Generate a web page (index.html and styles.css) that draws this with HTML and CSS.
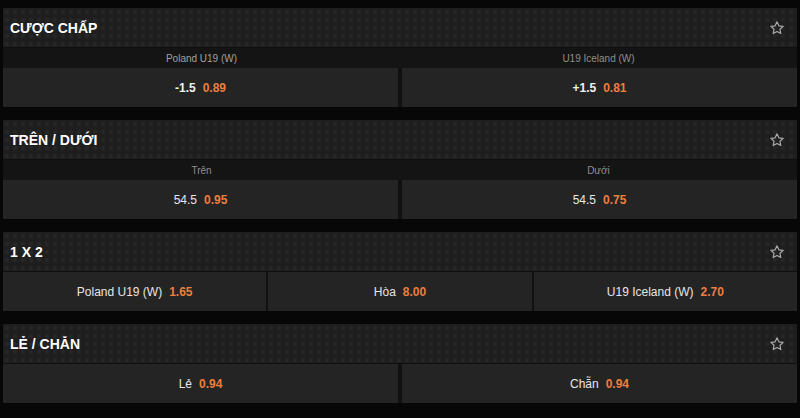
FILE: index.html
```html
<!DOCTYPE html>
<html lang="vi">
<head>
    <meta charset="UTF-8">
    <meta name="viewport" content="width=device-width, initial-scale=1.0">
    <title>Kèo cược</title>
    <link rel="stylesheet" href="styles.css">
</head>
<body>
    <div class="markets">

        <!-- Cược chấp -->
        <div class="market">
            <div class="market-head">
                <h2>CƯỢC CHẤP</h2>
                <svg class="star" viewBox="0 0 24 24"><path d="M12 2.8l2.8 5.9 6.4.8-4.7 4.4 1.2 6.4L12 17.2l-5.7 3.1 1.2-6.4-4.7-4.4 6.4-.8z"/></svg>
            </div>
            <div class="labels cols-2">
                <span class="strong">Poland U19 (W)</span>
                <span>U19 Iceland (W)</span>
            </div>
            <div class="odds cols-2">
                <button><b>-1.5</b><em>0.89</em></button>
                <button><b>+1.5</b><em>0.81</em></button>
            </div>
        </div>

        <!-- Trên / Dưới -->
        <div class="market">
            <div class="market-head">
                <h2>TRÊN / DƯỚI</h2>
                <svg class="star" viewBox="0 0 24 24"><path d="M12 2.8l2.8 5.9 6.4.8-4.7 4.4 1.2 6.4L12 17.2l-5.7 3.1 1.2-6.4-4.7-4.4 6.4-.8z"/></svg>
            </div>
            <div class="labels cols-2">
                <span>Trên</span>
                <span>Dưới</span>
            </div>
            <div class="odds cols-2">
                <button><span>54.5</span><em>0.95</em></button>
                <button><span>54.5</span><em>0.75</em></button>
            </div>
        </div>

        <!-- 1 X 2 -->
        <div class="market">
            <div class="market-head">
                <h2>1 X 2</h2>
                <svg class="star" viewBox="0 0 24 24"><path d="M12 2.8l2.8 5.9 6.4.8-4.7 4.4 1.2 6.4L12 17.2l-5.7 3.1 1.2-6.4-4.7-4.4 6.4-.8z"/></svg>
            </div>
            <div class="odds cols-3">
                <button><span>Poland U19 (W)</span><em>1.65</em></button>
                <button><span>Hòa</span><em>8.00</em></button>
                <button><span>U19 Iceland (W)</span><em>2.70</em></button>
            </div>
        </div>

        <!-- Lẻ / Chẵn -->
        <div class="market">
            <div class="market-head">
                <h2>LẺ / CHẴN</h2>
                <svg class="star" viewBox="0 0 24 24"><path d="M12 2.8l2.8 5.9 6.4.8-4.7 4.4 1.2 6.4L12 17.2l-5.7 3.1 1.2-6.4-4.7-4.4 6.4-.8z"/></svg>
            </div>
            <div class="odds cols-2">
                <button><span>Lẻ</span><em>0.94</em></button>
                <button><span>Chẵn</span><em>0.94</em></button>
            </div>
        </div>

    </div>
</body>
</html>
```

FILE: styles.css
```css
body {
    margin: 0;
    background: #070707;
    font-family: "Liberation Sans", Arial, sans-serif;
    color: #fff;
}

.markets {
    display: flex;
    flex-direction: column;
    gap: 13px;
    padding: 8px 3px 0 3px;
}

.market {
    background: #151515;
}

.market-head {
    height: 40px;
    display: flex;
    align-items: center;
    justify-content: space-between;
    padding: 0 12px 0 7px;
    background-color: #1e1e1e;
    background-image: radial-gradient(circle, #262626 1.5px, transparent 3px);
    background-size: 8px 8px;
    border-bottom: 1px solid #101010;
    box-sizing: border-box;
}

.market-head h2 {
    margin: 0;
    font-size: 14px;
    font-weight: bold;
    color: #fff;
}

.star {
    width: 16px;
    height: 16px;
    fill: none;
    stroke: #aaa;
    stroke-width: 1.8;
    stroke-linejoin: round;
}

.labels {
    display: grid;
    height: 20px;
    background: #141414;
    align-items: center;
    font-size: 10px;
    color: #8e8e8e;
    text-align: center;
}

.labels .strong {
    color: #a0a0a0;
}

.cols-2 {
    grid-template-columns: 1fr 1fr;
}

.cols-3 {
    grid-template-columns: 1fr 1fr 1fr;
}

.odds {
    display: grid;
    gap: 4px;
    background: #111;
}

.odds button {
    height: 39px;
    border: none;
    background: #242424;
    color: #e6e6e6;
    font-family: inherit;
    font-size: 12px;
    display: flex;
    align-items: center;
    justify-content: center;
    gap: 7px;
    cursor: pointer;
}

.odds button b {
    font-weight: bold;
    color: #f0f0f0;
}

.odds button em {
    font-style: normal;
    font-weight: bold;
    color: #ee7d3e;
}

.odds.cols-3 {
    gap: 2px;
}
```
